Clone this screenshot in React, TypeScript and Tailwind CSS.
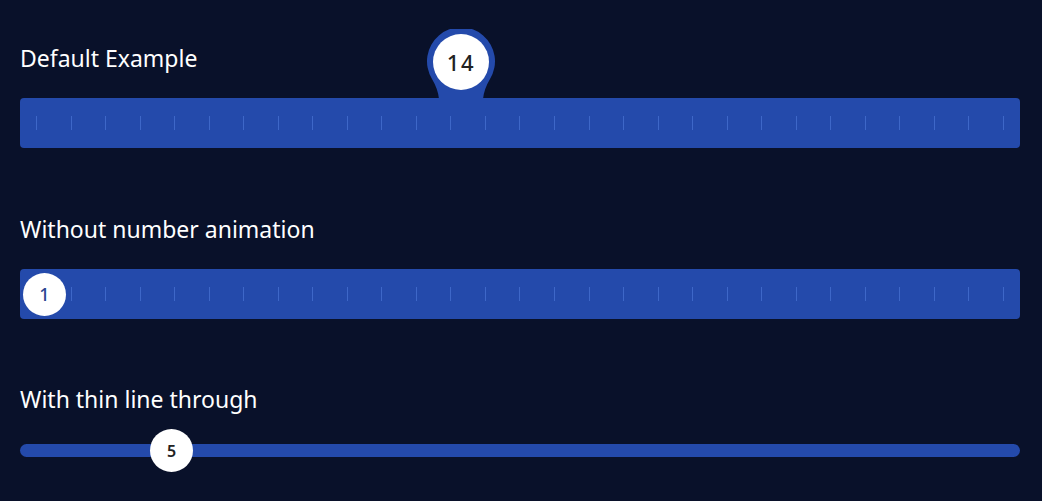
const ticks = Array.from({ length: 29 });

function Ticks() {
  return (
    <div className="absolute inset-0 flex items-center justify-between px-4">
      {ticks.map((_, i) => (
        <span key={i} className="h-[14px] w-px bg-[#4a73d4]/70" />
      ))}
    </div>
  );
}

function Label({ children }: { children: React.ReactNode }) {
  return <h2 className="text-[23px] leading-8 text-white">{children}</h2>;
}

// teardrop tooltip that sits on top of the track
function BubbleThumb({ value, left }: { value: number; left: string }) {
  return (
    <div className="absolute bottom-[49px] h-[70px] w-[70px] -translate-x-1/2" style={{ left }}>
      <svg width="70" height="70" viewBox="0 0 70 70" className="absolute inset-0">
        <path
          d="M6 50 A34 34 0 1 1 64 50 Q58 60 57 70 L13 70 Q12 60 6 50 Z"
          fill="#244aab"
        />
      </svg>
      <div className="absolute left-[7px] top-[5px] flex h-[56px] w-[56px] items-center justify-center rounded-full bg-white text-[22px] font-medium tracking-[0.08em] text-[#222]">
        {value}
      </div>
    </div>
  );
}

export default function App() {
  return (
    <div
      className="flex min-h-[501px] flex-col gap-[65px] bg-[#09112a] pl-5 pr-[22px] pt-[42px]"
      style={{ fontFamily: '"Noto Sans", "Open Sans", sans-serif' }}
    >
      <section className="flex flex-col gap-6">
        <Label>Default Example</Label>
        <div className="relative h-[50px] rounded bg-[#244aab]">
          <Ticks />
          <BubbleThumb value={14} left="44.1%" />
        </div>
      </section>

      <section className="flex flex-col gap-6">
        <Label>Without number animation</Label>
        <div className="relative flex h-[50px] items-center rounded bg-[#244aab] pl-[3px]">
          <Ticks />
          <div className="relative flex h-[43px] w-[43px] items-center justify-center rounded-full bg-white text-[18px] font-medium text-[#2a4590]">
            1
          </div>
        </div>
      </section>

      <section className="-mt-px flex flex-col gap-[14px]">
        <Label>With thin line through</Label>
        <div className="relative flex h-[43px] items-center">
          <div className="h-[13px] w-full rounded-full bg-[#244aab]" />
          <div className="absolute left-[130px] flex h-[43px] w-[43px] items-center justify-center rounded-full bg-white text-[16px] font-semibold text-[#222]">
            5
          </div>
        </div>
      </section>
    </div>
  );
}
